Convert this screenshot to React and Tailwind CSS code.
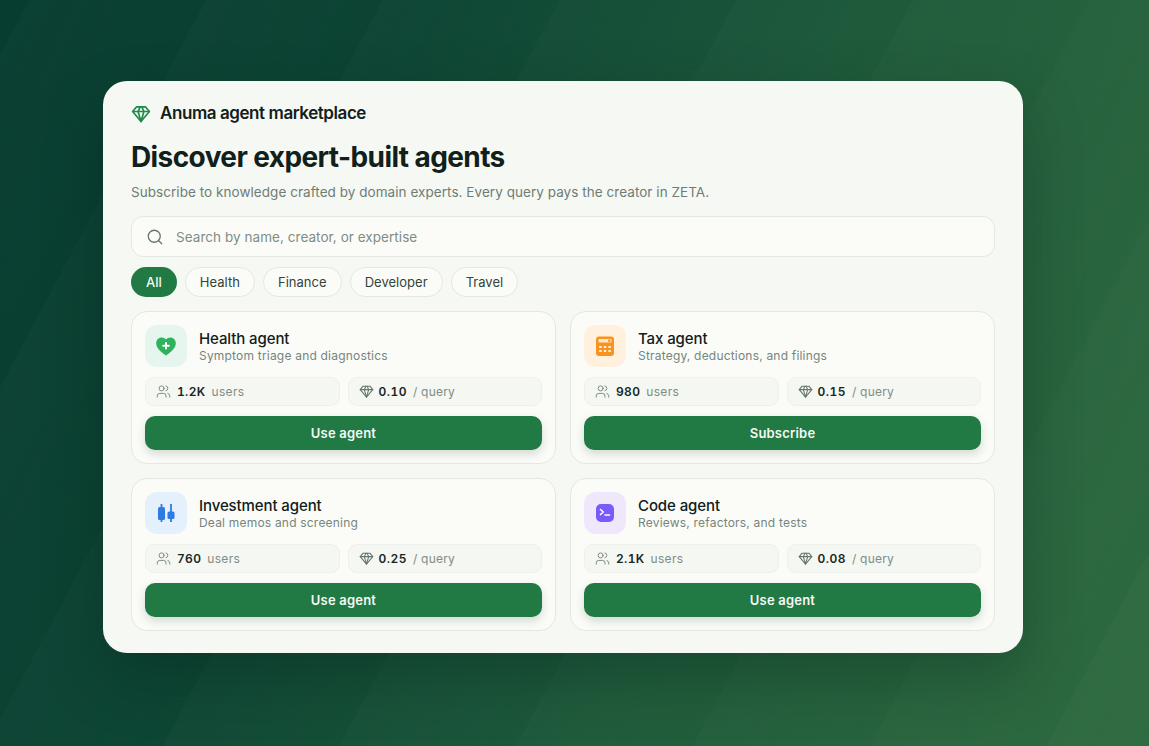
import { Search, Users } from "lucide-react";

const agents = [
  { name: "Health agent", desc: "Symptom triage and diagnostics", users: "1.2K", price: "0.10", cta: "Use agent", tint: "bg-[#e6f6ee]", icon: <HeartIcon /> },
  { name: "Tax agent", desc: "Strategy, deductions, and filings", users: "980", price: "0.15", cta: "Subscribe", tint: "bg-[#fff1de]", icon: <CalcIcon /> },
  { name: "Investment agent", desc: "Deal memos and screening", users: "760", price: "0.25", cta: "Use agent", tint: "bg-[#e5f0fd]", icon: <CandleIcon /> },
  { name: "Code agent", desc: "Reviews, refactors, and tests", users: "2.1K", price: "0.08", cta: "Use agent", tint: "bg-[#efe8fd]", icon: <TerminalIcon /> },
];

const filters = ["All", "Health", "Finance", "Developer", "Travel"];

function Gem({ className, width = "2" }) {
  return (
    <svg viewBox="0 0 24 24" fill="none" stroke="currentColor" strokeWidth={width} strokeLinejoin="round" strokeLinecap="round" className={className}>
      <path d="M6.5 3.5h11l4.5 5.5L12 21 2 9z" />
      <path d="M2 9h20M8.5 9L12 21l3.5-12M8.5 9l2.5-5.5M15.5 9L13 3.5" />
    </svg>
  );
}

function HeartIcon() {
  return (
    <svg viewBox="0 0 24 24" className="w-6 h-6">
      <path d="M12 21.5C6 17.5 2.2 13.8 2.2 9c0-3.2 2.4-5.6 5.4-5.6 1.8 0 3.4.8 4.4 2.2 1-1.4 2.6-2.2 4.4-2.2 3 0 5.4 2.4 5.4 5.6 0 4.8-3.8 8.5-9.8 12.5z" fill="#2fb25c" />
      <path d="M12 9v5.5M9.2 11.7h5.6" stroke="#fff" strokeWidth="2" strokeLinecap="round" />
    </svg>
  );
}

function CalcIcon() {
  return (
    <svg viewBox="0 0 24 24" className="w-6 h-6">
      <rect x="3" y="2.5" width="18" height="19.5" rx="3" fill="#f7931e" />
      <rect x="5.5" y="5" width="13" height="3.6" rx="0.8" fill="#ffe9cd" />
      <rect x="15" y="5.6" width="2.6" height="2.2" fill="#f7931e" />
      <g fill="#fff3e2">
        <rect x="6.2" y="12" width="2.4" height="2" />
        <rect x="10.8" y="12" width="2.4" height="2" />
        <rect x="15.4" y="12" width="2.4" height="2" />
        <rect x="6.2" y="16" width="2.4" height="2" />
        <rect x="10.8" y="16" width="2.4" height="2" />
        <rect x="15.4" y="16" width="2.4" height="2" />
      </g>
    </svg>
  );
}

function CandleIcon() {
  return (
    <svg viewBox="0 0 24 24" className="w-6 h-6">
      <path d="M7.5 3v18M17 3v18" stroke="#2f7be5" strokeWidth="1.8" />
      <rect x="4" y="6" width="7" height="13" rx="1.6" fill="#2f7be5" />
      <rect x="13.5" y="10.5" width="7" height="7.5" rx="1.6" fill="#2f7be5" />
    </svg>
  );
}

function TerminalIcon() {
  return (
    <svg viewBox="0 0 24 24" className="w-6 h-6">
      <rect x="3" y="3" width="18" height="18" rx="5" fill="#7a5af8" />
      <path d="M7.5 8.5l2.8 2.5-2.8 2.5" stroke="#fff" strokeWidth="1.6" fill="none" strokeLinecap="round" strokeLinejoin="round" />
      <path d="M12 14h4.5" stroke="#fff" strokeWidth="1.6" strokeLinecap="round" />
    </svg>
  );
}

function AgentCard({ agent }) {
  return (
    <div className="flex flex-col rounded-[16px] border border-[#e4e8e2] bg-[#fbfcf8] p-[13px]">
      <div className="flex items-center gap-3">
        <div className={`flex h-[42px] w-[42px] items-center justify-center rounded-[12px] ${agent.tint}`}>{agent.icon}</div>
        <div className="flex flex-col">
          <span className="text-[15px] leading-[19px] font-medium tracking-[-0.1px] text-[#10201a]">{agent.name}</span>
          <span className="text-[12px] leading-[15px] tracking-[0.2px] text-[#76857d]">{agent.desc}</span>
        </div>
      </div>
      <div className="mt-[10px] grid grid-cols-2 gap-2">
        <div className="flex h-[29px] items-center rounded-[9px] border border-[#edf0eb] bg-[#f5f7f3] pl-[10px]">
          <Users className="h-[15px] w-[15px] text-[#76857d]" strokeWidth={1.5} />
          <span className="ml-[6px] text-[12px] font-semibold tracking-[0.35px] tabular-nums text-[#17261f]">{agent.users}</span>
          <span className="ml-[6px] text-[12px] tracking-[0.3px] text-[#7f8d85]">users</span>
        </div>
        <div className="flex h-[29px] items-center rounded-[9px] border border-[#edf0eb] bg-[#f5f7f3] pl-[10px]">
          <Gem className="h-[15px] w-[15px] text-[#66756d]" width="1.7" />
          <span className="ml-[5px] text-[12px] font-semibold tracking-[0.5px] tabular-nums text-[#17261f]">{agent.price}</span>
          <span className="ml-[6px] text-[12px] tracking-[0.2px] text-[#7f8d85]">/ query</span>
        </div>
      </div>
      <button className="mt-[10px] h-[34px] rounded-[10px] bg-[#217a44] pt-[2px] text-[13px] font-semibold tracking-[0.2px] text-[#f4f9f4] shadow-[0_4px_10px_rgba(20,60,40,0.18)]">
        {agent.cta}
      </button>
    </div>
  );
}

export default function App() {
  return (
    <div className="relative h-[746px] w-full overflow-hidden bg-[linear-gradient(112deg,#073c30_0%,#0d4534_30%,#1f5b3b_62%,#2f6b40_100%)] pl-[103px] pt-[81px] font-['Inter',sans-serif]">
      <div className="absolute inset-0 bg-[repeating-linear-gradient(118deg,rgba(255,255,255,0.014)_26px,rgba(255,255,255,0)_182px)]" />
      <div className="relative flex h-[572px] w-[920px] flex-col rounded-[24px] bg-[#f6f8f4] px-[28px] pt-[23px] shadow-[0_24px_60px_rgba(0,30,20,0.3)]">
        <div className="flex h-[20px] items-center gap-[9px]">
          <Gem className="h-[20px] w-[20px] text-[#1f8a4c]" />
          <span className="text-[17px] font-semibold tracking-[-0.43px] text-[#10201a]">Anuma agent marketplace</span>
        </div>
        <h1 className="mt-[15px] text-[28px] leading-[36px] font-bold tracking-[-0.6px] text-[#10201a]">Discover expert-built agents</h1>
        <p className="mt-[7px] text-[13.5px] leading-[20px] tracking-[0.05px] text-[#6e7d75]">
          Subscribe to knowledge crafted by domain experts. Every query pays the creator in ZETA.
        </p>
        <div className="mt-[14px] flex h-[41px] items-center rounded-[12px] border border-[#e4e8e2] bg-[#fbfcf8] pl-[14px]">
          <Search className="h-[18px] w-[18px] text-[#66756d]" strokeWidth={1.7} />
          <span className="ml-[12px] pt-[2px] text-[13.5px] tracking-[0.05px] text-[#7f8d85]">Search by name, creator, or expertise</span>
        </div>
        <div className="mt-[10px] flex gap-2">
          {filters.map((f, i) => (
            <span
              key={f}
              className={
                i === 0
                  ? "flex h-[30px] items-center rounded-full bg-[#217a44] px-[15px] pt-[2px] text-[13px] font-medium text-[#f4f9f4]"
                  : "flex h-[30px] items-center rounded-full border border-[#e4e8e2] bg-[#fbfcf8] px-[14px] pt-[2px] text-[13px] tracking-[0.03px] text-[#33443b]"
              }
            >
              {f}
            </span>
          ))}
        </div>
        <div className="mt-[14px] grid grid-cols-2 gap-[14px]">
          {agents.map((a) => (
            <AgentCard key={a.name} agent={a} />
          ))}
        </div>
      </div>
    </div>
  );
}
